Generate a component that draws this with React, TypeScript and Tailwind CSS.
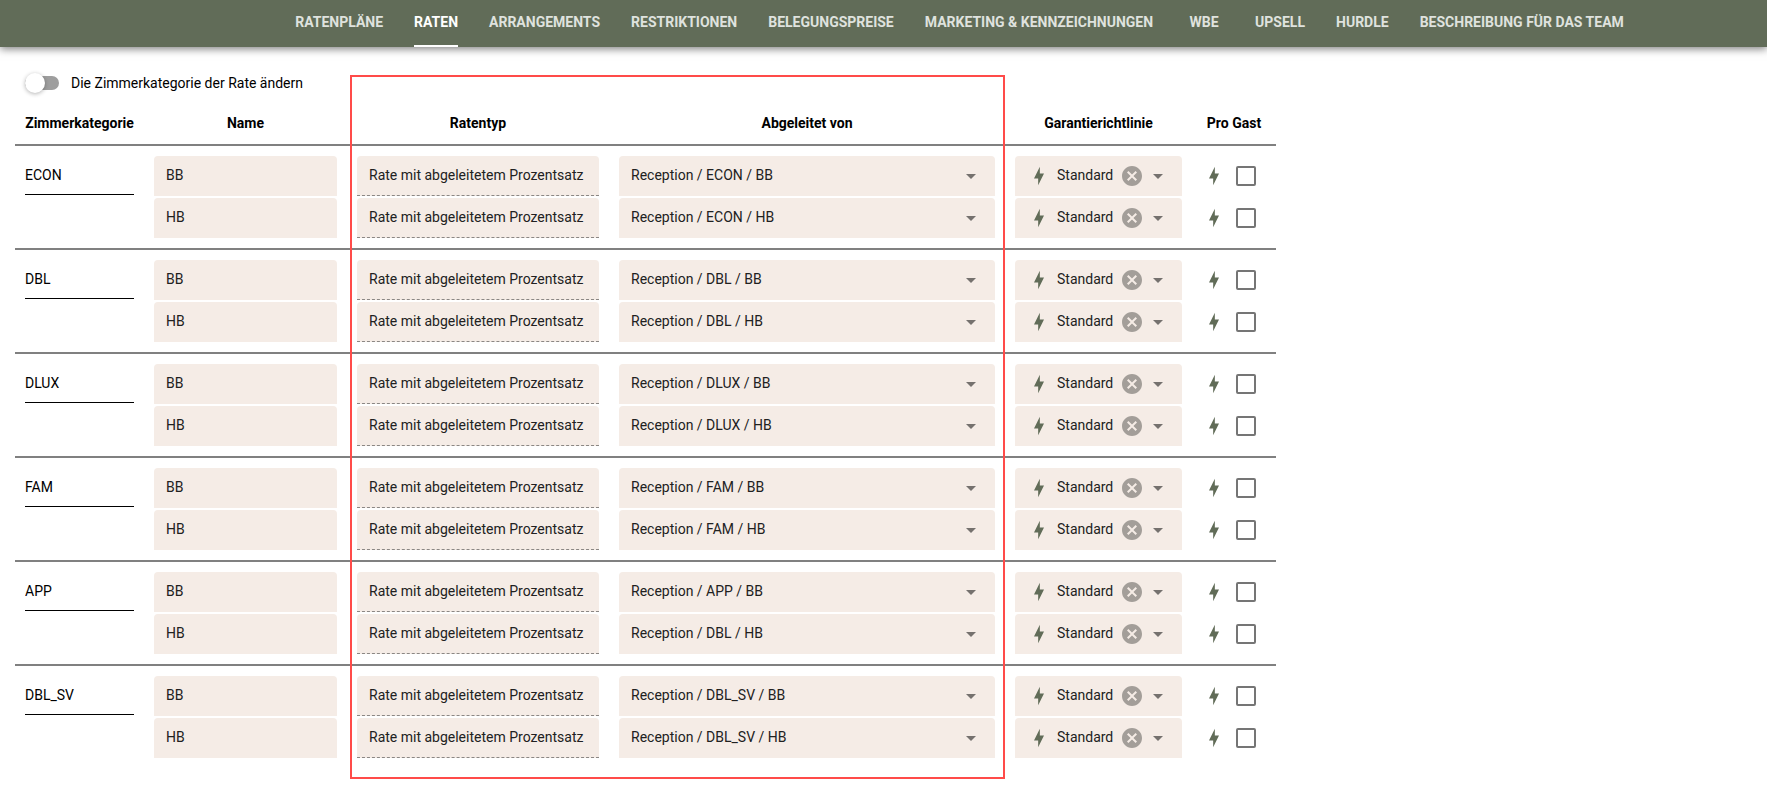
import React, { useState } from 'react';

const tabs = [
  'Ratenpläne',
  'Raten',
  'Arrangements',
  'Restriktionen',
  'Belegungspreise',
  'Marketing & Kennzeichnungen',
  'WBE',
  'Upsell',
  'Hurdle',
  'Beschreibung für das Team',
];

const categories = [
  { name: 'ECON', rates: [{ name: 'BB', parent: 'Reception / ECON / BB' }, { name: 'HB', parent: 'Reception / ECON / HB' }] },
  { name: 'DBL', rates: [{ name: 'BB', parent: 'Reception / DBL / BB' }, { name: 'HB', parent: 'Reception / DBL / HB' }] },
  { name: 'DLUX', rates: [{ name: 'BB', parent: 'Reception / DLUX / BB' }, { name: 'HB', parent: 'Reception / DLUX / HB' }] },
  { name: 'FAM', rates: [{ name: 'BB', parent: 'Reception / FAM / BB' }, { name: 'HB', parent: 'Reception / FAM / HB' }] },
  { name: 'APP', rates: [{ name: 'BB', parent: 'Reception / APP / BB' }, { name: 'HB', parent: 'Reception / DBL / HB' }] },
  { name: 'DBL_SV', rates: [{ name: 'BB', parent: 'Reception / DBL_SV / BB' }, { name: 'HB', parent: 'Reception / DBL_SV / HB' }] },
];

const BoltIcon = () => (
  <svg viewBox="0 0 24 24" className="size-5 shrink-0 fill-[#616c58]" aria-hidden="true">
    <path d="M11 15H6L13 1V9H18L11 23V15Z" />
  </svg>
);

const ArrowIcon = () => (
  <svg viewBox="0 0 24 24" className="size-6 shrink-0 fill-[#75716e] pointer-events-none" aria-hidden="true">
    <path d="M7 10L12 15L17 10H7Z" />
  </svg>
);

const ClearIcon = () => (
  <svg viewBox="0 0 24 24" className="size-6 fill-[#a39e99]" aria-hidden="true">
    <path d="M12,2C17.53,2 22,6.47 22,12C22,17.53 17.53,22 12,22C6.47,22 2,17.53 2,12C2,6.47 6.47,2 12,2M15.59,7L12,10.59L8.41,7L7,8.41L10.59,12L7,15.59L8.41,17L12,13.41L15.59,17L17,15.59L13.41,12L17,8.41L15.59,7Z" />
  </svg>
);

function RateRow({ category, rate, first }: { category: any; rate: any; first: boolean }) {
  const [guarantee, setGuarantee] = useState('Standard');
  const label = `${category.name} ${rate.name}`;
  const cell = first ? 'border-t-2 border-[#808080] px-[10px] pt-[10px]' : 'px-[10px] pt-[2px] pb-[10px]';

  return (
    <tr>
      {first && (
        <th rowSpan={2} scope="rowgroup" className="border-t-2 border-[#808080] px-[10px] pt-[10px] align-top font-normal">
          <input
            aria-label="Zimmerkategorie"
            defaultValue={category.name}
            className="block w-full h-[39px] pb-px border-b border-black outline-none text-black"
          />
        </th>
      )}
      <td className={cell}>
        <input
          aria-label={`Name ${label}`}
          defaultValue={rate.name}
          className="block w-full h-10 px-3 pb-0.5 rounded-t bg-[#f5ece6] outline-none"
        />
      </td>
      <td className={cell}>
        <select
          aria-label={`Ratentyp ${label}`}
          disabled
          className="block w-full h-10 px-3 pb-px rounded-t border-b border-dashed border-[#8b8784] bg-[#f5ece6] appearance-none opacity-100"
        >
          <option>Rate mit abgeleitetem Prozentsatz</option>
        </select>
      </td>
      <td className={cell}>
        <div className="grid items-center h-10 rounded-t bg-[#f5ece6]">
          <select
            aria-label={`Abgeleitet von ${label}`}
            className="col-start-1 row-start-1 w-full h-10 pl-3 pr-10 pb-0.5 appearance-none outline-none"
          >
            <option>{rate.parent}</option>
          </select>
          <span className="col-start-1 row-start-1 justify-self-end mr-3 pointer-events-none">
            <ArrowIcon />
          </span>
        </div>
      </td>
      <td className={cell}>
        <div className="flex items-center h-10 pl-[14px] pr-3 rounded-t bg-[#f5ece6]">
          <BoltIcon />
          <select
            aria-label={`Garantierichtlinie ${label}`}
            value={guarantee}
            onChange={(e) => setGuarantee(e.target.value)}
            className="flex-1 min-w-0 h-10 pl-2 pb-0.5 appearance-none outline-none"
          >
            <option value="">–</option>
            <option value="Standard">Standard</option>
          </select>
          <button type="button" aria-label="Auswahl löschen" onClick={() => setGuarantee('')} className="mr-[2px]">
            <ClearIcon />
          </button>
          <ArrowIcon />
        </div>
      </td>
      <td className={cell}>
        <div className="flex items-center gap-3 h-10 pl-0.5">
          <BoltIcon />
          <input
            type="checkbox"
            aria-label={`Pro Gast ${label}`}
            className="size-5 appearance-none rounded-xs border-2 border-[#757575] checked:bg-[#616c58]"
          />
        </div>
      </td>
    </tr>
  );
}

export default function App() {
  const [activeTab, setActiveTab] = useState('Raten');

  return (
    <div className="min-h-screen bg-white font-[Roboto,sans-serif] text-sm text-[#212121]">
      <nav className="flex justify-center gap-[31px] h-[47px] pl-[152px] bg-[#616c58] shadow-[0_2px_8px_rgba(0,0,0,0.5)]">
        {tabs.map((tab) => (
          <button
            key={tab}
            type="button"
            onClick={() => setActiveTab(tab)}
            className={`min-w-10 pt-0.5 pb-1 border-b-2 font-bold uppercase whitespace-nowrap ${
              activeTab === tab ? 'border-white text-white' : 'border-transparent text-[#dfe2de]'
            }`}
          >
            {tab}
          </button>
        ))}
      </nav>

      <main className="px-[15px] pt-[26px]">
        <label className="flex items-center w-fit pl-[10px] text-black">
          <input
            type="checkbox"
            role="switch"
            className="flex items-center w-[34px] h-[14px] mr-3 appearance-none rounded-full bg-[#9e9e9e] before:size-5 before:shrink-0 before:rounded-full before:bg-white before:shadow-[0_1px_4px_rgba(0,0,0,0.3)] checked:bg-[#616c58] checked:before:ml-[14px]"
          />
          Die Zimmerkategorie der Rate ändern
        </label>

        <div className="relative w-full max-w-[1261px]">
          <table className="w-full table-fixed border-separate border-spacing-0">
            <colgroup>
              <col className="w-[129px]" />
              <col className="w-[203px]" />
              <col className="w-[262px]" />
              <col />
              <col className="w-[187px]" />
              <col className="w-[84px]" />
            </colgroup>
            <thead>
              <tr className="h-[51px] text-black">
                <th className="pt-[9px]">Zimmerkategorie</th>
                <th className="pt-[9px]">Name</th>
                <th className="pt-[9px]">Ratentyp</th>
                <th className="pt-[9px]">Abgeleitet von</th>
                <th className="pt-[9px]">Garantierichtlinie</th>
                <th className="pt-[9px] whitespace-nowrap">Pro Gast</th>
              </tr>
            </thead>
            {categories.map((category) => (
              <tbody key={category.name}>
                {category.rates.map((rate, i) => (
                  <RateRow key={rate.name} category={category} rate={rate} first={i === 0} />
                ))}
              </tbody>
            ))}
          </table>
          {/* highlight around the derived rate columns */}
          <div className="absolute left-[335px] right-[271px] -top-[18px] -bottom-[11px] border-2 border-[#ff4b49] pointer-events-none" />
        </div>
      </main>
    </div>
  );
}
